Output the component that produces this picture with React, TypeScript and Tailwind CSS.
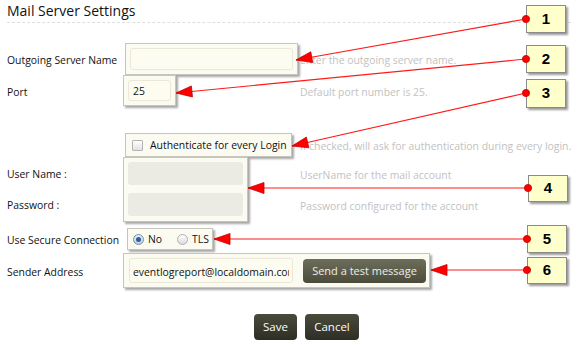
import React from "react";

type Pt = [number, number];

// callout annotations: box position, dot on the box edge, arrow tip on the form
const callouts: { n: number; x: number; y: number; h: number; dot: Pt; tip: Pt }[] = [
  { n: 1, x: 526, y: 5, h: 28, dot: [526, 19], tip: [296, 60] },
  { n: 2, x: 526, y: 45, h: 28, dot: [526, 59], tip: [176, 93] },
  { n: 3, x: 526, y: 79, h: 29, dot: [526, 93], tip: [292, 146] },
  { n: 4, x: 528, y: 175, h: 27, dot: [528, 188], tip: [248, 188] },
  { n: 5, x: 527, y: 225, h: 28, dot: [527, 239], tip: [214, 239] },
  { n: 6, x: 527, y: 257, h: 27, dot: [527, 270], tip: [431, 270] },
];

function headPoints(from: Pt, tip: Pt, len = 16, half = 5.5) {
  const dx = from[0] - tip[0];
  const dy = from[1] - tip[1];
  const d = Math.hypot(dx, dy);
  const ux = dx / d;
  const uy = dy / d;
  const bx = tip[0] + ux * len;
  const by = tip[1] + uy * len;
  return `${tip[0]},${tip[1]} ${bx - uy * half},${by + ux * half} ${bx + uy * half},${by - ux * half}`;
}

const Panel = ({ className = "", children }: { className?: string; children?: React.ReactNode }) => (
  <div className={`bg-[#fcfbf2] border border-[#c6c6bd] shadow-[2px_2px_2px_rgba(0,0,0,0.35)] ${className}`}>
    {children}
  </div>
);

const Help = ({ children }: { children: React.ReactNode }) => (
  <div className="pt-[4px] text-[10.4px] text-[#c2c2c2] whitespace-nowrap">{children}</div>
);

const Label = ({ children }: { children: React.ReactNode }) => (
  <div className="w-[116px] shrink-0 pt-[4px] text-[10.4px] text-[#111] whitespace-nowrap">{children}</div>
);

const Radio = ({ on }: { on?: boolean }) => (
  <span
    className={`shrink-0 w-[11px] h-[11px] rounded-full border flex items-center justify-center ${
      on ? "border-[#7d8da6] bg-gradient-to-b from-[#e8eef6] to-[#c4d0e0]" : "border-[#b0b0b0] bg-gradient-to-b from-white to-[#dcdcdc]"
    }`}
  >
    {on && <span className="w-[5px] h-[5px] rounded-full bg-[#2f5f9e]" />}
  </span>
);

export default function App() {
  return (
    <div className="relative w-[578px] h-[345px] overflow-hidden bg-white font-['Open_Sans',sans-serif]">
      <div className="mx-[7px] h-[23px] border-b border-dashed border-[#dedede] text-[14px] leading-[22px] text-[#111]">
        Mail Server Settings
      </div>

      <div className="pl-[7px]">
        {/* outgoing server */}
        <div className="mt-[20px] h-[32px] flex items-center">
          <Label>Outgoing Server Name</Label>
          <div className="w-[177px] shrink-0">
            <Panel className="ml-[2px] w-[173px] h-[32px] p-[4px]">
              <div className="h-full rounded-[3px] border border-[#ebe8d8] bg-[#fdfcf0]" />
            </Panel>
          </div>
          <Help>Enter the outgoing server name.</Help>
        </div>

        {/* port */}
        <div className="h-[31px] flex items-center">
          <Label>Port</Label>
          <div className="w-[177px] shrink-0">
            <Panel className="w-[53px] h-[31px] p-[4px]">
              <div className="h-full rounded-[3px] border border-[#ebe8d8] bg-[#fdfcf0] pl-[4px] pt-[2px] flex items-center text-[10.4px] text-[#111]">
                25
              </div>
            </Panel>
          </div>
          <Help>Default port number is 25.</Help>
        </div>

        {/* authenticate */}
        <div className="mt-[27px] h-[24px] flex items-center">
          <div className="w-[116px] shrink-0" />
          <div className="w-[177px] shrink-0">
            <Panel className="ml-[2px] w-[167px] h-[24px] pl-[6px] flex items-center gap-[7px]">
              <span className="shrink-0 w-[11px] h-[11px] border border-[#b4b4b4] rounded-[1px] bg-gradient-to-b from-white to-[#e2e2e2]" />
              <span className="pt-[2px] text-[10.4px] text-[#111] whitespace-nowrap">Authenticate for every Login</span>
            </Panel>
          </div>
          <Help>If checked, will ask for authentication during every login.</Help>
        </div>

        {/* credentials */}
        <div className="h-[65px] flex">
          <div className="w-[116px] shrink-0 pt-[5px] flex flex-col gap-[8px]">
            <div className="h-[23px] pt-[3px] flex items-center text-[10.4px] text-[#111]">User Name :</div>
            <div className="h-[23px] pt-[3px] flex items-center text-[10.4px] text-[#111]">Password :</div>
          </div>
          <div className="w-[177px] shrink-0">
            <Panel className="w-[125px] h-[65px] p-[4px] flex flex-col gap-[8px]">
              <div className="h-[23px] rounded-[3px] bg-[#ecebe3]" />
              <div className="h-[23px] rounded-[3px] bg-[#ecebe3]" />
            </Panel>
          </div>
          <div className="pt-[5px] flex flex-col gap-[8px]">
            <div className="h-[23px] flex items-center"><Help>UserName for the mail account</Help></div>
            <div className="h-[23px] flex items-center"><Help>Password configured for the account</Help></div>
          </div>
        </div>

        {/* secure connection */}
        <div className="mt-[6px] h-[22px] flex items-center">
          <Label>Use Secure Connection</Label>
          <Panel className="ml-[4px] w-[86px] h-[22px] pl-[5px] flex items-center text-[10.4px] text-[#111]">
            <Radio on />
            <span className="ml-[4px] pt-[2px]">No</span>
            <span className="ml-[15px]"><Radio /></span>
            <span className="ml-[4px] pt-[2px]">TLS</span>
          </Panel>
        </div>

        {/* sender */}
        <div className="mt-[3px] h-[35px] flex items-center">
          <Label>Sender Address</Label>
          <Panel className="w-[307px] h-[35px] pl-[5px] flex items-center gap-[10px]">
            <input
              readOnly
              value="eventlogreport@localdomain.com"
              className="w-[164px] h-[25px] rounded-[3px] border border-[#ebe8d8] bg-[#fdfcf0] px-[3px] pt-[2px] text-[10.4px] text-[#111] outline-none"
            />
            <button className="w-[123px] h-[24px] pt-[1px] rounded-[4px] bg-gradient-to-b from-[#6e6e5c] to-[#4c4c3c] text-[11px] text-[#eeeee6]">
              Send a test message
            </button>
          </Panel>
        </div>

        {/* actions */}
        <div className="mt-[26px] ml-[247px] flex gap-[8px]">
          <button className="w-[43px] h-[26px] rounded-[4px] bg-gradient-to-b from-[#4a4a3c] to-[#2e2e24] text-[11.5px] text-white">
            Save
          </button>
          <button className="w-[54px] h-[26px] rounded-[4px] bg-gradient-to-b from-[#4a4a3c] to-[#2e2e24] text-[11.5px] text-white">
            Cancel
          </button>
        </div>
      </div>

      {/* annotation arrows */}
      <svg className="absolute inset-0 pointer-events-none" width={578} height={345}>
        {callouts.map((c) => (
          <g key={c.n}>
            <line x1={c.dot[0]} y1={c.dot[1]} x2={c.tip[0]} y2={c.tip[1]} stroke="#ff1a1a" strokeWidth={1.2} />
            <polygon points={headPoints(c.dot, c.tip)} fill="#ff0000" stroke="#c40000" strokeWidth={0.8} />
          </g>
        ))}
      </svg>

      {callouts.map((c) => (
        <div
          key={c.n}
          className="absolute w-[40px] flex items-center justify-center border border-[#8a8a8a] bg-[#ffffcc] shadow-[2px_2px_2px_rgba(0,0,0,0.4)] font-['Liberation_Sans',sans-serif] text-[15px] font-bold text-black"
          style={{ left: c.x, top: c.y, height: c.h }}
        >
          {c.n}
        </div>
      ))}

      <svg className="absolute inset-0 pointer-events-none" width={578} height={345}>
        {callouts.map((c) => (
          <circle key={c.n} cx={c.dot[0]} cy={c.dot[1]} r={3.6} fill="#ff0000" stroke="#c80000" strokeWidth={0.8} />
        ))}
      </svg>
    </div>
  );
}
